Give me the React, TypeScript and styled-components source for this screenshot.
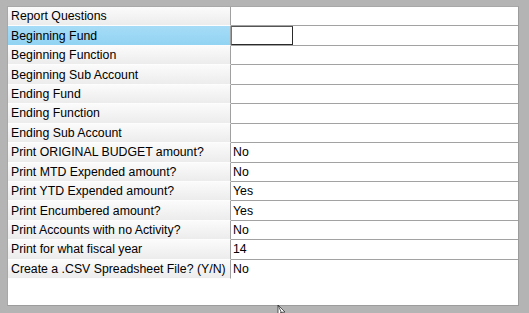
import styled, { createGlobalStyle } from "styled-components";

const GlobalStyle = createGlobalStyle`
  html, body {
    margin: 0;
    padding: 0;
    background: #b4b4b4;
  }
  body {
    font-family: "Liberation Sans", Arial, sans-serif;
  }
`;

type Question = { label: string; value: string };

const questions: Question[] = [
  { label: "Report Questions", value: "" },
  { label: "Beginning Fund", value: "" },
  { label: "Beginning Function", value: "" },
  { label: "Beginning Sub Account", value: "" },
  { label: "Ending Fund", value: "" },
  { label: "Ending Function", value: "" },
  { label: "Ending Sub Account", value: "" },
  { label: "Print ORIGINAL BUDGET amount?", value: "No" },
  { label: "Print MTD Expended amount?", value: "No" },
  { label: "Print YTD Expended amount?", value: "Yes" },
  { label: "Print Encumbered amount?", value: "Yes" },
  { label: "Print Accounts with no Activity?", value: "No" },
  { label: "Print for what fiscal year", value: "14" },
  { label: "Create a .CSV Spreadsheet File? (Y/N)", value: "No" },
];

export default function App() {
  const selected = 1;
  return (
    <Screen>
      <GlobalStyle />
      <Panel>
        <Grid>
          {questions.map((q, i) => (
            <Row key={q.label}>
              <Label $selected={i === selected}>{q.label}</Label>
              <Value $last={i === questions.length - 1}>
                {i === selected ? <Editor /> : q.value}
              </Value>
            </Row>
          ))}
        </Grid>
      </Panel>
      <Cursor width="12" height="10" viewBox="0 0 12 10">
        <path d="M1 0 L1 10 L3.5 7.5 L5.5 10 L1 0 Z M1 0 L8 7 L4.5 7.3" fill="#fff" stroke="#333" strokeWidth="0.8" />
      </Cursor>
    </Screen>
  );
}

const Screen = styled.div`
  position: relative;
  width: 529px;
  height: 313px;
  padding: 6px 10px 7px 7px;
  box-sizing: border-box;
`;

const Panel = styled.div`
  height: 100%;
  background: #fff;
  border: 1px solid #9c9c9c;
  border-top-color: #a8a8a8;
  border-left-color: #a8a8a8;
  box-sizing: border-box;
`;

const Grid = styled.div`
  display: flex;
  flex-direction: column;
`;

const Row = styled.div`
  display: grid;
  grid-template-columns: 223px 1fr;
  height: 19.45px;
`;

const Label = styled.div<{ $selected: boolean }>`
  display: flex;
  align-items: center;
  padding-left: 3px;
  font-size: 12.3px;
  color: #000;
  white-space: nowrap;
  overflow: hidden;
  border-right: 1px solid #a0a0a0;
  border-bottom: 1px solid #fdfdfd;
  box-sizing: border-box;
  background: ${(p) =>
    p.$selected
      ? "linear-gradient(to bottom, #a6dcf6, #92d3f3)"
      : "linear-gradient(to bottom, #fbfbfb, #ececec)"};
`;

const Value = styled.div<{ $last: boolean }>`
  display: flex;
  align-items: center;
  padding-left: 2px;
  font-size: 12.3px;
  color: #000;
  border-bottom: 1px solid ${(p) => (p.$last ? "transparent" : "#a2a2a2")};
  box-sizing: border-box;
`;

const Editor = styled.div`
  width: 62px;
  height: 100%;
  margin-left: -2px;
  border: 1px solid #2a2a2a;
  border-left-color: #777;
  border-top-color: #555;
  box-sizing: border-box;
  background: #fff;
`;

const Cursor = styled.svg`
  position: absolute;
  left: 277px;
  top: 305px;
`;
